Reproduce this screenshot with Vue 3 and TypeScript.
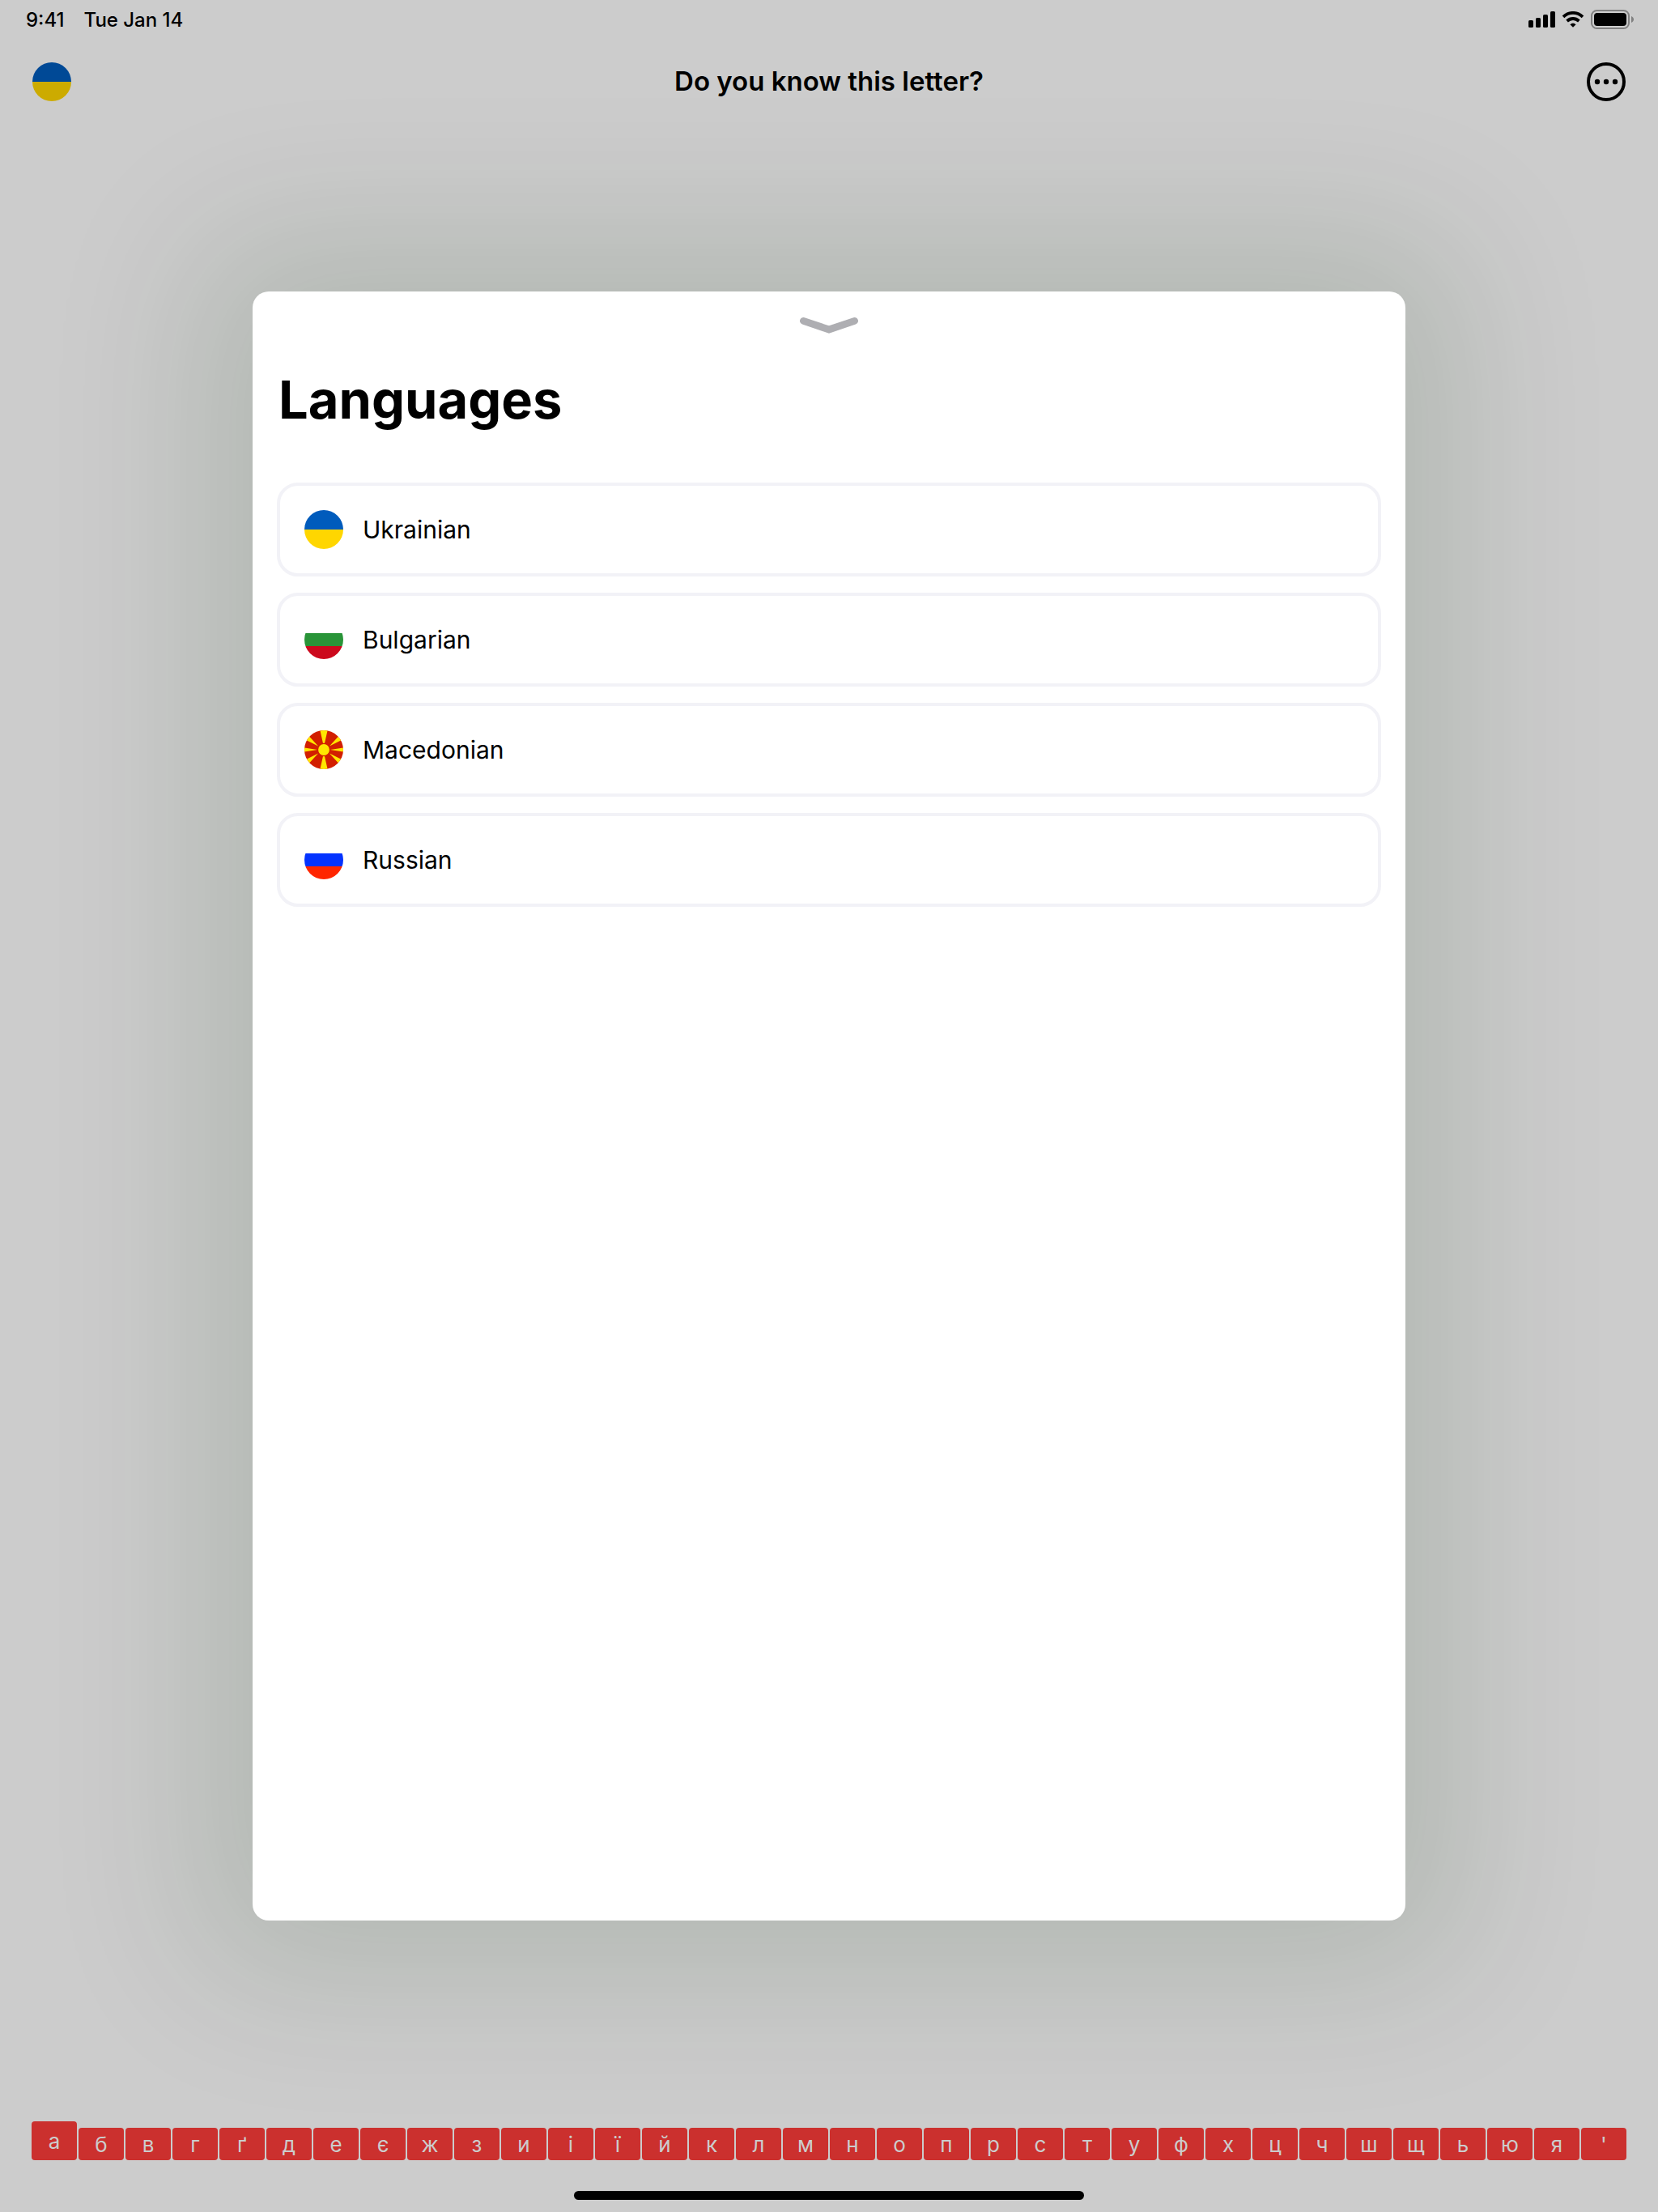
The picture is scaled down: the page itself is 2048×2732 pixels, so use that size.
<script setup lang="ts">
import { ref } from 'vue'

interface Language {
  id: string
  name: string
}

const languages: Language[] = [
  { id: 'ua', name: 'Ukrainian' },
  { id: 'bg', name: 'Bulgarian' },
  { id: 'mk', name: 'Macedonian' },
  { id: 'ru', name: 'Russian' },
]

const letters: string[] = [...'абвгґдеєжзиіїйклмнопрстуфхцчшщьюя', "'"]
const activeLetter = ref<number>(0)
const selected = ref<string>('ua')
</script>

<template>
  <div class="screen">
    <div class="status">
      <div class="status-side">
        <span>9:41</span>
        <span>Tue Jan 14</span>
      </div>
      <div class="status-icons">
        <svg width="33" height="20" viewBox="0 0 33 20" aria-hidden="true">
          <rect x="0" y="11" width="6" height="9" rx="1.6" />
          <rect x="9" y="8" width="6" height="12" rx="1.6" />
          <rect x="18" y="4" width="6" height="16" rx="1.6" />
          <rect x="27" y="0" width="6" height="20" rx="1.6" />
        </svg>
        <svg width="28" height="20" viewBox="0 0 28 20" aria-hidden="true">
          <path d="M2 6.8C9 .2 19 .2 26 6.8" fill="none" stroke="#000" stroke-width="3.8" />
          <path d="M6.6 12C11 8 17 8 21.4 12" fill="none" stroke="#000" stroke-width="3.8" />
          <path d="M10.4 16.2C12.3 14.1 15.7 14.1 17.6 16.2L14 19.8Z" />
        </svg>
        <svg width="53" height="24" viewBox="0 0 53 24" aria-hidden="true">
          <rect x="1" y="1" width="46" height="22" rx="6.5" fill="none" stroke="#808080" stroke-width="2" />
          <rect x="4" y="4" width="40" height="16" rx="4" />
          <path d="M50 8C54 9.5 54 14.5 50 16Z" fill="#808080" />
        </svg>
      </div>
    </div>

    <header class="topbar">
      <button class="icon-button dim" type="button" aria-label="Choose language">
        <span class="flag" :class="selected"></span>
      </button>
      <h1 class="question">Do you know this letter?</h1>
      <button class="icon-button" type="button" aria-label="More">
        <svg width="48" height="48" viewBox="0 0 48 48">
          <circle cx="24" cy="24" r="22" fill="none" stroke="#000" stroke-width="4" />
          <circle cx="13" cy="24" r="3.2" />
          <circle cx="24" cy="24" r="3.2" />
          <circle cx="35" cy="24" r="3.2" />
        </svg>
      </button>
    </header>

    <footer class="bottom">
      <div class="letters">
        <button
          v-for="(letter, index) in letters"
          :key="letter"
          class="letter"
          :class="{ active: index === activeLetter }"
          type="button"
          @click="activeLetter = index"
        >
          {{ letter }}
        </button>
      </div>
      <div class="home-indicator"></div>
    </footer>

    <div class="overlay">
      <section class="sheet" role="dialog" aria-labelledby="sheet-title">
        <button class="grabber" type="button" aria-label="Close">
          <svg width="72" height="20" viewBox="0 0 72 20">
            <path d="M4.4 4.4L36 15L67.6 4.4" fill="none" stroke="#aeaeb2" stroke-width="8.8" stroke-linecap="round" />
          </svg>
        </button>
        <h2 id="sheet-title" class="sheet-title">Languages</h2>
        <ul class="list">
          <li v-for="language in languages" :key="language.id">
            <button class="row" type="button" @click="selected = language.id">
              <svg v-if="language.id === 'mk'" class="flag" viewBox="-24 -24 48 48" aria-hidden="true">
                <rect x="-24" y="-24" width="48" height="48" fill="#d21f00" />
                <g fill="#ffe600">
                  <path d="M-1 -8L-4.6 -24H4.6L1 -8ZM-1 8L-4.6 24H4.6L1 8Z" />
                  <path d="M-8 0L-24 -2.4V2.4ZM8 0L24 -2.4V2.4Z" />
                  <path d="M-7 -4.6L-22 -12L-18 -16.4ZM7 -4.6L22 -12L18 -16.4ZM-7 4.6L-22 12L-18 16.4ZM7 4.6L22 12L18 16.4Z" />
                </g>
                <circle r="7.6" fill="#ffe600" stroke="#d21f00" stroke-width="1.4" />
              </svg>
              <span v-else class="flag" :class="language.id"></span>
              <span>{{ language.name }}</span>
            </button>
          </li>
        </ul>
      </section>
    </div>
  </div>
</template>

<style>
body {
  margin: 0;
  background: #cccccc;
}
</style>

<style scoped>
.screen {
  position: relative;
  display: flex;
  flex-direction: column;
  min-height: 100vh;
  overflow: hidden;
  background: #cccccc;
  color: #000;
  font-family: Inter, "Liberation Sans", sans-serif;
}

button {
  margin: 0;
  padding: 0;
  border: 0;
  background: none;
  color: inherit;
  font: inherit;
  cursor: pointer;
}

svg {
  display: block;
}

.status {
  display: flex;
  align-items: center;
  justify-content: space-between;
  height: 48px;
  padding: 0 30px 0 32px;
  font-size: 24px;
  font-weight: 500;
}

.status-side {
  display: flex;
  gap: 24px;
}

.status-icons {
  display: flex;
  align-items: center;
  gap: 8px;
}

.topbar {
  display: flex;
  align-items: center;
  justify-content: space-between;
  height: 106px;
  padding: 0 40px;
}

.icon-button {
  width: 48px;
  height: 48px;
}

.dim {
  filter: brightness(0.8);
}

.question {
  margin: 0;
  padding-bottom: 2px;
  font-size: 33px;
  font-weight: 600;
}

.flag {
  display: block;
  flex: none;
  width: 48px;
  height: 48px;
  border-radius: 50%;
  overflow: hidden;
}

.ua {
  background: linear-gradient(#005bbc 50%, #ffd600 50%);
}

.bg {
  background: linear-gradient(#fff 33.3%, #299438 33.3% 66.6%, #cc091d 66.6%);
}

.mk {
  background: radial-gradient(#ffe600 30%, #d21f00 30%);
}

.ru {
  background: linear-gradient(#fff 33.3%, #0433ff 33.3% 66.6%, #ff2600 66.6%);
}

.bottom {
  display: flex;
  flex-direction: column;
  align-items: center;
  gap: 38px;
  margin-top: auto;
  padding: 0 39px 15px;
}

.letters {
  display: flex;
  align-items: flex-end;
  gap: 2px;
  width: 100%;
}

.letter {
  box-sizing: border-box;
  flex: 1 1 0;
  min-width: 0;
  height: 40px;
  padding-top: 2px;
  border-radius: 4px;
  background: #cb302e;
  color: #cccccc;
  font-size: 26px;
  line-height: 32px;
  text-align: center;
}

.letter.active {
  height: 48px;
}

.home-indicator {
  width: 32%;
  max-width: 630px;
  min-width: 30%;
  height: 11px;
  border-radius: 6px;
  background: #000;
}

.overlay {
  position: absolute;
  inset: 0;
  display: flex;
  align-items: center;
  justify-content: center;
  pointer-events: none;
}

.sheet {
  box-sizing: border-box;
  display: flex;
  flex-direction: column;
  width: 1424px;
  max-width: 92%;
  min-height: 73.66vh;
  padding: 32px 30px;
  border-radius: 20px;
  background: #fff;
  box-shadow: 0 0 190px 66px rgba(4, 48, 0, 0.126);
  pointer-events: auto;
}

.grabber {
  align-self: center;
}

.sheet-title {
  margin: 40px 0 60px;
  padding-left: 2px;
  font-size: 65px;
  font-weight: 700;
  line-height: 84px;
}

.list {
  display: flex;
  flex-direction: column;
  gap: 20px;
  margin: 0;
  padding: 0;
  list-style: none;
}

.row {
  box-sizing: border-box;
  display: flex;
  align-items: center;
  gap: 24px;
  width: 100%;
  height: 116px;
  padding: 0 30px;
  border: 4px solid #f2f2f7;
  border-radius: 26px;
  font-size: 30px;
  text-align: left;
}
</style>
